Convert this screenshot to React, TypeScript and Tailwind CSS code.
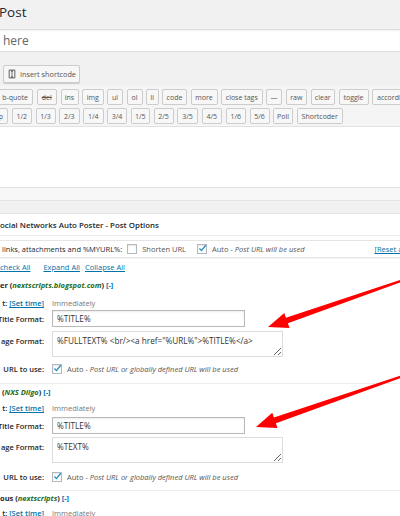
import React from "react";

function QBtn({ w, children, extra = "" }: { w: string; children: React.ReactNode; extra?: string }) {
  return (
    <span
      className={`${w} h-[16px] shrink-0 flex items-center justify-center rounded-[2px] border border-[#cccccc] bg-[#f7f7f7] text-[7px] leading-none text-[#555] whitespace-nowrap overflow-hidden ${extra}`}
    >
      {children}
    </span>
  );
}

function Check({ checked = false }: { checked?: boolean }) {
  return (
    <span className="relative block w-[10px] h-[10px] shrink-0 border border-[#b4b9be] bg-white shadow-[inset_0_1px_2px_rgba(0,0,0,0.1)]">
      {checked && (
        <svg viewBox="0 0 10 10" className="absolute left-[0px] top-[-1px] w-[9px] h-[9px]">
          <path d="M1.6 5 L3.9 7.4 L8.6 1.4" stroke="#1e8cbe" strokeWidth="1.4" fill="none" />
        </svg>
      )}
    </span>
  );
}

function Label({ children }: { children: React.ReactNode }) {
  return (
    <div className="w-[44px] shrink-0 flex justify-end overflow-hidden whitespace-nowrap font-semibold text-[#23282d]">
      {children}
    </div>
  );
}

function Net({ children }: { children: React.ReactNode }) {
  return <span className="italic font-bold text-[#236b23]">{children}</span>;
}

function Block({
  head,
  text,
  mHead,
  mTime,
  mInput,
  mArea,
  mUrl,
}: {
  head: React.ReactNode;
  text: string;
  mHead: string;
  mTime: string;
  mInput: string;
  mArea: string;
  mUrl: string;
}) {
  return (
    <>
      <div className={`${mHead} h-[12px] flex items-center whitespace-nowrap font-bold`}>{head}</div>
      <div className={`${mTime} h-[12px] flex items-center`}>
        <Label>
          <span>t:&nbsp;</span>
          <span className="text-[#0073aa] underline">[Set time]</span>
        </Label>
        <span className="ml-[8px] text-[#777]">Immediately</span>
      </div>
      <div className={`${mInput} h-[17px] flex items-center`}>
        <Label>Title Format:</Label>
        <input
          readOnly
          value="%TITLE%"
          className="ml-[8px] w-[193px] h-[17px] border border-[#b9b9b9] bg-white px-[4px] text-[8.2px] text-[#333] font-['Open_Sans',sans-serif] shadow-[inset_0_1px_2px_rgba(0,0,0,0.08)] outline-none"
        />
      </div>
      <div className={`${mArea} h-[26px] flex items-start`}>
        <div className="pt-[4px]">
          <Label>age Format:</Label>
        </div>
        <textarea
          readOnly
          defaultValue={text}
          className="ml-[8px] w-[231px] h-[26px] border border-[#dddddd] bg-white px-[4px] pt-[3px] text-[8.2px] leading-[11px] text-[#333] font-['Open_Sans',sans-serif] resize outline-none overflow-hidden"
        />
      </div>
      <div className={`${mUrl} h-[12px] flex items-center`}>
        <Label>URL to use:</Label>
        <span className="ml-[8px]">
          <Check checked />
        </span>
        <span className="ml-[5px] whitespace-nowrap text-[#555]">
          Auto - <span className="italic">Post URL or globally defined URL will be used</span>
        </span>
      </div>
    </>
  );
}

export default function App() {
  return (
    <div className="relative w-[400px] h-[516px] overflow-hidden bg-[#f1f1f1] font-['Open_Sans',sans-serif] text-[#23282d]">
      {/* Heading */}
      <div className="h-[29px] pt-[2px]">
        <h1 className="text-[13.5px] leading-[20px] font-normal text-[#23282d] -ml-[1px]">Post</h1>
      </div>

      {/* Title input */}
      <div className="h-[23px] bg-white border-y border-[#dddddd] flex items-center pl-[3px] text-[12px] text-[#666] shadow-[inset_0_1px_2px_rgba(0,0,0,0.06)]">
        here
      </div>

      {/* Media buttons */}
      <div className="h-[34px] pt-[13px] pl-[3px]">
        <div className="w-[77px] h-[18px] flex items-center rounded-[2px] border border-[#cccccc] bg-[#f7f7f7] shadow-[0_1px_0_#cccccc] text-[7.3px] text-[#555] whitespace-nowrap">
          <svg viewBox="0 0 8 10" className="ml-[4px] w-[8px] h-[10px]">
            <rect x="0.6" y="0.6" width="6.8" height="8.8" rx="1" fill="#7a7a7a" />
            <rect x="1.8" y="1.8" width="1.2" height="6.4" fill="#f7f7f7" />
            <rect x="5" y="1.8" width="1.2" height="6.4" fill="#f7f7f7" />
            <rect x="3.4" y="3" width="1.2" height="4" fill="#dcdcdc" />
          </svg>
          <span className="ml-[4px]">Insert shortcode</span>
        </div>
      </div>

      {/* Quicktags toolbar */}
      <div className="h-[41px] bg-[#f5f5f5] border-b border-[#e2e2e2] pt-[3px] flex flex-col gap-[3px] overflow-hidden">
        <div className="flex gap-[3.5px] -ml-[3px]">
          <QBtn w="w-[36px]">b-quote</QBtn>
          <QBtn w="w-[20.5px]">
            <span className="line-through">del</span>
          </QBtn>
          <QBtn w="w-[18px]">ins</QBtn>
          <QBtn w="w-[21.5px]">img</QBtn>
          <QBtn w="w-[16px]">ul</QBtn>
          <QBtn w="w-[16px]">ol</QBtn>
          <QBtn w="w-[12.5px]">li</QBtn>
          <QBtn w="w-[25px]">code</QBtn>
          <QBtn w="w-[27px]">more</QBtn>
          <QBtn w="w-[41.5px]">close tags</QBtn>
          <QBtn w="w-[16px]">—</QBtn>
          <QBtn w="w-[21.5px]">raw</QBtn>
          <QBtn w="w-[24.5px]">clear</QBtn>
          <QBtn w="w-[30px]">toggle</QBtn>
          <QBtn w="w-[50px]" extra="justify-start pl-[4px]">accordion</QBtn>
        </div>
        <div className="flex gap-[3.5px] -ml-[6px]">
          <QBtn w="w-[14px]">p</QBtn>
          <QBtn w="w-[20.5px]">1/2</QBtn>
          <QBtn w="w-[20px]">1/3</QBtn>
          <QBtn w="w-[20.5px]">2/3</QBtn>
          <QBtn w="w-[20.5px]">1/4</QBtn>
          <QBtn w="w-[20px]">3/4</QBtn>
          <QBtn w="w-[19.5px]">1/5</QBtn>
          <QBtn w="w-[20px]">2/5</QBtn>
          <QBtn w="w-[21px]">3/5</QBtn>
          <QBtn w="w-[20.5px]">4/5</QBtn>
          <QBtn w="w-[20.5px]">1/6</QBtn>
          <QBtn w="w-[20px]">5/6</QBtn>
          <QBtn w="w-[20px]">Poll</QBtn>
          <QBtn w="w-[46.5px]">Shortcoder</QBtn>
        </div>
      </div>

      {/* Editor body */}
      <div className="h-[60px] bg-white" />
      {/* Status bar */}
      <div className="h-[14px] bg-[#f7f7f7] border-y border-[#e2e2e2]" />
      <div className="h-[12px]" />

      {/* Metabox */}
      <div className="h-[400px] bg-white border-t border-[#e5e5e5] text-[7.5px] leading-[12px]">
        <div className="h-[22px] border-b border-[#eeeeee] flex items-center text-[7.9px] font-semibold whitespace-nowrap text-[#23282d]">
          ocial Networks Auto Poster - Post Options
        </div>

        <div className="mt-[4px] -ml-[5px] w-[520px] h-[18px] border border-[#e5e5e5] shadow-[0_1px_1px_rgba(0,0,0,0.04)] flex items-center pl-[6px] whitespace-nowrap text-[#23282d]">
          <span>links, attachments and %MYURL%:</span>
          <span className="ml-[5px]">
            <Check />
          </span>
          <span className="ml-[5px] text-[#555]">Shorten URL</span>
          <span className="ml-[11px]">
            <Check checked />
          </span>
          <span className="ml-[5px] text-[#555]">
            Auto - <span className="italic">Post URL will be used</span>
          </span>
          <span className="ml-[70px] text-[#0073aa] underline">[Reset all settings to default]</span>
        </div>

        <div className="mt-[3px] h-[12px] flex items-center whitespace-nowrap">
          <span className="text-[#0073aa] underline">check All</span>
          <span className="ml-[13px] text-[#0073aa] underline">Expand All</span>
          <span className="ml-[5px] text-[#0073aa] underline">Collapse All</span>
        </div>

        <Block
          head={
            <>
              <span>er&nbsp;(</span>
              <Net>nextscripts.blogspot.com</Net>
              <span>)&nbsp;</span>
              <span className="text-[#0073aa]">[-]</span>
            </>
          }
          text={'%FULLTEXT% <br/><a href="%URL%">%TITLE%</a>'}
          mHead="mt-[6px]"
          mTime="mt-[6px]"
          mInput="mt-[1px]"
          mArea="mt-[4px]"
          mUrl="mt-[6px]"
        />
        <div className="mt-[8px] border-t border-[#eeeeee]" />
        <Block
          head={
            <>
              <span className="pl-[2px]">(</span>
              <Net>NXS Diigo</Net>
              <span>)&nbsp;</span>
              <span className="text-[#0073aa]">[-]</span>
            </>
          }
          text="%TEXT%"
          mHead="mt-[2px]"
          mTime="mt-[4px]"
          mInput="mt-[3px]"
          mArea="mt-[3px]"
          mUrl="mt-[8px]"
        />
        <div className="mt-[7px] border-t border-[#eeeeee]" />
        <div className="mt-[1px] h-[12px] flex items-center whitespace-nowrap font-bold">
          <span>ous&nbsp;(</span>
          <Net>nextscripts</Net>
          <span>)&nbsp;</span>
          <span className="text-[#0073aa]">[-]</span>
        </div>
        <div className="mt-[3px] h-[12px] flex items-center">
          <Label>
            <span>t:&nbsp;</span>
            <span className="text-[#0073aa] underline">[Set time]</span>
          </Label>
          <span className="ml-[8px] text-[#777]">Immediately</span>
        </div>
      </div>

      {/* Red annotation arrows */}
      <svg className="absolute left-0 top-0 w-[400px] h-[516px] pointer-events-none" viewBox="0 0 400 516">
        <polygon
          fill="#ff0000"
          points="268,327 284.3,313 285.9,317.7 401.6,279.5 402.4,281.7 287.9,323.3 289.5,328.1"
        />
        <polygon
          fill="#ff0000"
          points="256,427 272.3,412.8 273.9,417.6 401.6,375.2 402.4,377.4 275.9,423.2 277.5,428"
        />
      </svg>
    </div>
  );
}
